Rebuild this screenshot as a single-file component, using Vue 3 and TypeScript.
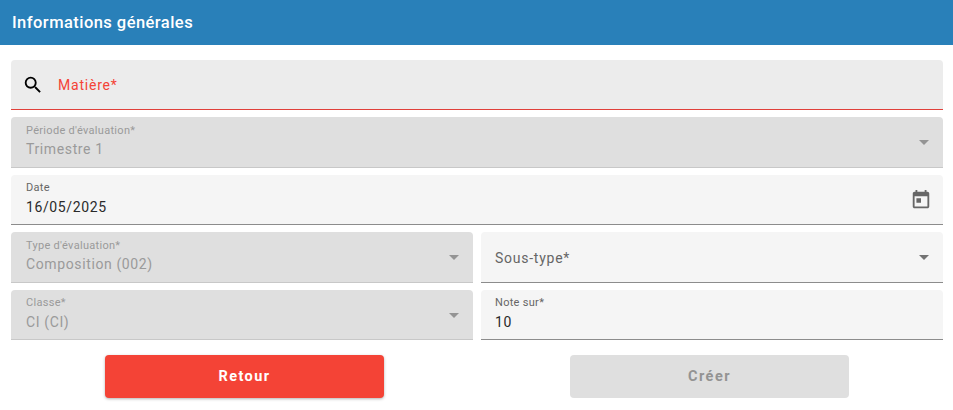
<template>
  <div class="page">
    <header class="title-bar">Informations générales</header>

    <form class="form" @submit.prevent>
      <div class="field field-search">
        <svg class="search-icon" viewBox="0 0 24 24" aria-hidden="true">
          <path d="M15.5 14h-.79l-.28-.27A6.47 6.47 0 0 0 16 9.5 6.5 6.5 0 1 0 9.5 16c1.61 0 3.09-.59 4.23-1.57l.27.28v.79l5 4.99L20.49 19l-4.99-5zm-6 0C7.01 14 5 11.99 5 9.5S7.01 5 9.5 5 14 7.01 14 9.5 11.99 14 9.5 14z" />
        </svg>
        <span class="search-label">Matière*</span>
      </div>

      <div class="field disabled">
        <div class="text">
          <label>Période d'évaluation*</label>
          <div class="value">Trimestre 1</div>
        </div>
        <span class="arrow"></span>
      </div>

      <div class="field">
        <div class="text">
          <label>Date</label>
          <div class="value">16/05/2025</div>
        </div>
        <svg class="calendar" viewBox="0 0 24 24" aria-hidden="true">
          <path d="M19 3h-1V1h-2v2H8V1H6v2H5c-1.11 0-1.99.9-1.99 2L3 19c0 1.1.89 2 2 2h14c1.1 0 2-.9 2-2V5c0-1.1-.9-2-2-2zm0 16H5V8h14v11zM7 10h5v5H7z" />
        </svg>
      </div>

      <div class="row">
        <div class="field disabled">
          <div class="text">
            <label>Type d'évaluation*</label>
            <div class="value">Composition (002)</div>
          </div>
          <span class="arrow"></span>
        </div>
        <div class="field right">
          <div class="text">
            <div class="placeholder">Sous-type*</div>
          </div>
          <span class="arrow"></span>
        </div>
      </div>

      <div class="row">
        <div class="field disabled">
          <div class="text">
            <label>Classe*</label>
            <div class="value">CI (CI)</div>
          </div>
          <span class="arrow"></span>
        </div>
        <div class="field right">
          <div class="text">
            <label>Note sur*</label>
            <div class="value">10</div>
          </div>
        </div>
      </div>

      <div class="actions">
        <button class="btn btn-back" type="button">Retour</button>
        <button class="btn btn-create" type="button" disabled>Créer</button>
      </div>
    </form>
  </div>
</template>

<script setup lang="ts">
</script>

<style>
body { background: #fff; }
</style>

<style scoped>
.page {
  width: 953px;
  height: 410px;
  overflow: hidden;
  background: #fff;
  font-family: Roboto, "Liberation Sans", sans-serif;
}
.title-bar {
  height: 45px;
  box-sizing: border-box;
  padding: 0 12px;
  line-height: 45px;
  background: #2980b9;
  color: #fff;
  font-size: 16.5px;
  font-weight: 500;
  letter-spacing: .45px;
}
.form {
  display: flex;
  flex-direction: column;
  gap: 7px;
  padding: 14.75px 10px 0 11px;
}
.field {
  display: flex;
  align-items: center;
  box-sizing: border-box;
  height: 50.5px;
  padding: 0 14px 0 15px;
  background: #f5f5f5;
  border-bottom: 1px solid #8c8c8c;
  border-radius: 4px 4px 0 0;
  min-width: 0;
}
.field.right {
  padding-left: 14px;
}
.field.disabled {
  background: #dfdfdf;
  border-bottom-color: #c8c8c8;
}
.field-search {
  background: #ececec;
  border-bottom-color: #e0403a;
  padding: 0 0 0 11px;
}
.search-icon {
  width: 22px;
  height: 22px;
  fill: #000;
  flex: none;
}
.search-label {
  margin-left: 14px;
  color: #f44336;
  font-size: 14px;
  letter-spacing: .78px;
}
.text {
  flex: 1;
  min-width: 0;
  padding-bottom: 1.5px;
}
label {
  display: block;
  font-size: 11px;
  line-height: 14px;
  color: #666;
  letter-spacing: .3px;
}
.value {
  margin-top: 1.5px;
  font-size: 14px;
  line-height: 20px;
  color: #2a2a2a;
  letter-spacing: .62px;
}
.placeholder {
  font-size: 14px;
  color: #666;
  letter-spacing: .75px;
  margin-top: 3px;
}
.disabled label,
.disabled .value {
  color: #9a9a9a;
}
.arrow {
  flex: none;
  width: 0;
  height: 0;
  margin-top: 1px;
  border-left: 5px solid transparent;
  border-right: 5px solid transparent;
  border-top: 5px solid #737373;
}
.disabled .arrow {
  border-top-color: #949494;
}
.calendar {
  flex: none;
  width: 22px;
  height: 22px;
  margin-right: -3px;
  fill: #666;
}
.row {
  display: grid;
  grid-template-columns: 462px 462px;
  gap: 8px;
}
.actions {
  display: flex;
  justify-content: space-between;
  padding: 0 94px;
  margin-top: 7.75px;
}
.btn {
  width: 279px;
  height: 43px;
  padding: 0 0 1px;
  border: 0;
  border-radius: 4px;
  font-family: inherit;
  font-size: 14.5px;
  font-weight: 700;
  letter-spacing: 1.45px;
}
.btn-back {
  background: #f44336;
  color: #fff;
  box-shadow: 0 1px 3px rgba(0, 0, 0, .3);
}
.btn-create {
  background: #dfdfdf;
  color: #939393;
}
</style>
